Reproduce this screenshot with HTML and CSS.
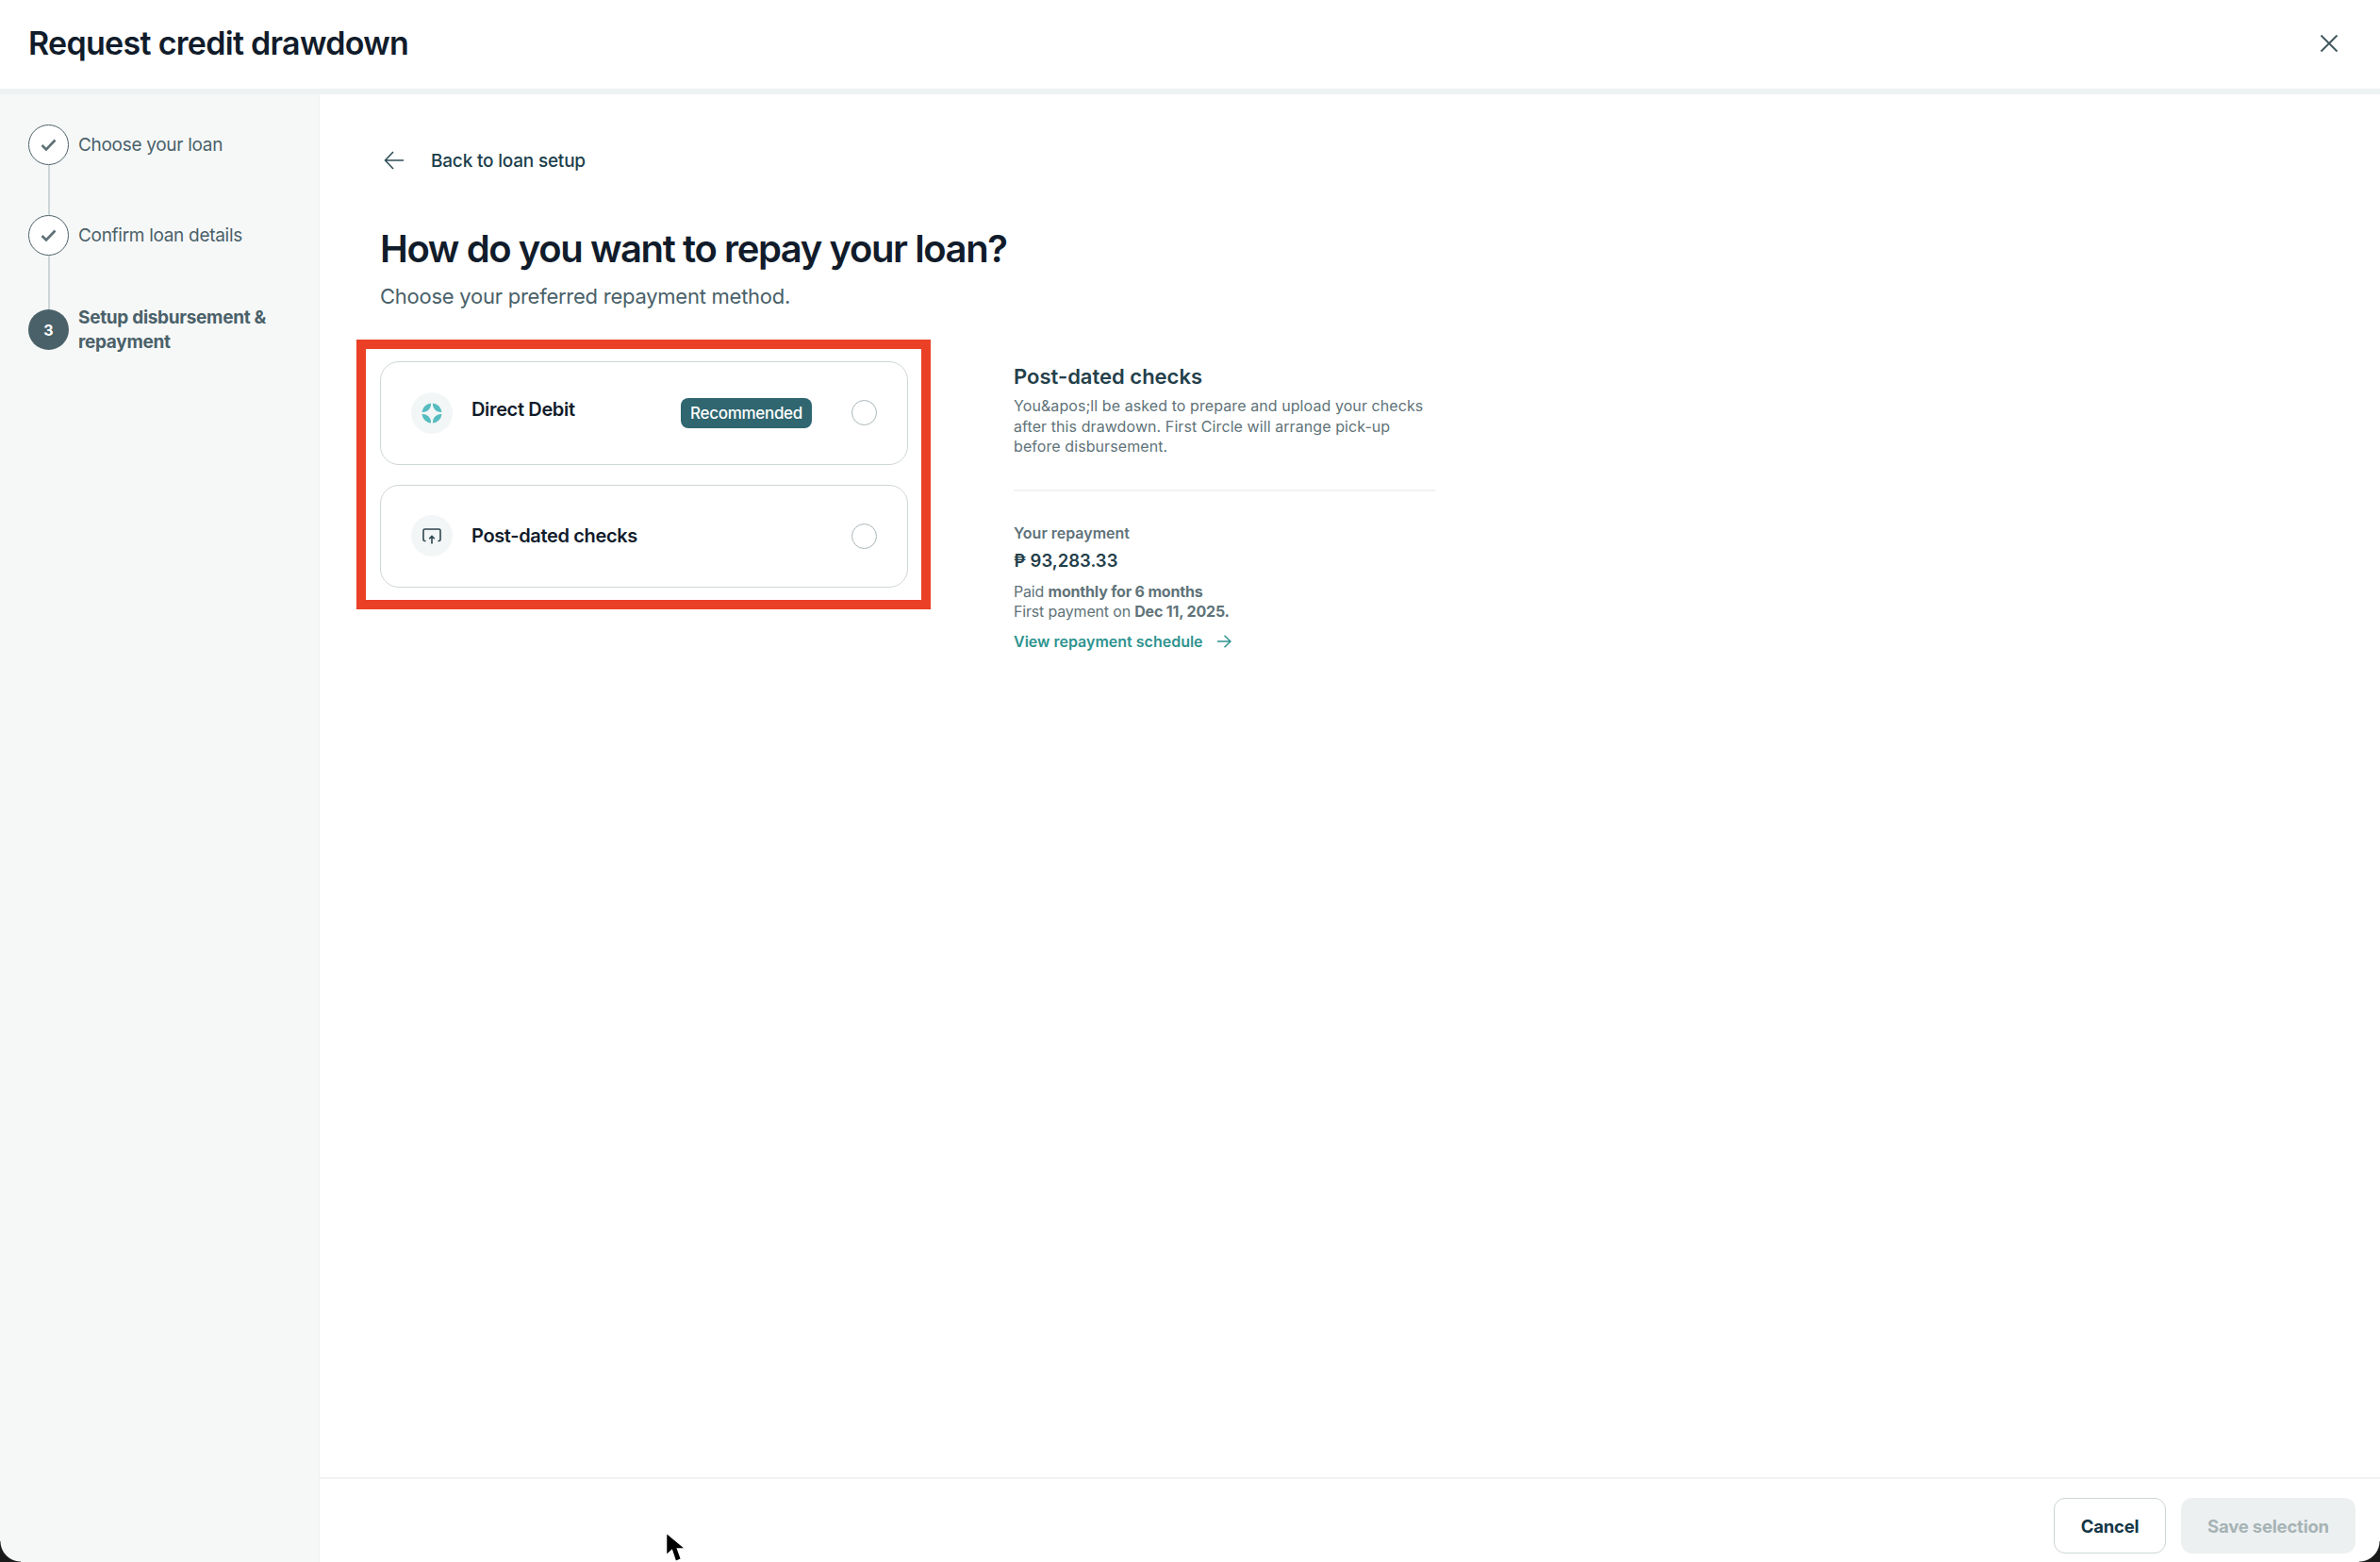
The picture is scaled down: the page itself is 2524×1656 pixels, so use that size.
FILE: index.html
```html
<!DOCTYPE html>
<html lang="en">
<head>
  <meta charset="UTF-8" />
  <title>Request credit drawdown</title>
  <link rel="stylesheet" href="styles.css">
</head>
<body>

<div class="app">
  <header class="topbar">
    <h1>Request credit drawdown</h1>
    <button class="btn-close" aria-label="Close">
      <svg width="20" height="20" viewBox="0 0 20 20" fill="none" stroke="#3d545c" stroke-width="1.8"><path d="M1.5 1.5l17 17M18.500 1.500l-17 17"/></svg>
    </button>
  </header>

  <div class="layout">
    <aside class="sidebar">
      <div class="step step-one">
        <div class="step-marker">
          <span class="step-circle">
            <svg width="17" height="13" viewBox="0 0 17 13" fill="none" stroke="#5f7177" stroke-width="2.6"><path d="M1.500 7l4.500 4.500L15.500 1.500"/></svg>
          </span>
          <span class="step-line"></span>
        </div>
        <span class="step-label">Choose your loan</span>
      </div>
      <div class="step step-two">
        <div class="step-marker">
          <span class="step-circle">
            <svg width="17" height="13" viewBox="0 0 17 13" fill="none" stroke="#5f7177" stroke-width="2.6"><path d="M1.500 7l4.500 4.500L15.500 1.500"/></svg>
          </span>
          <span class="step-line"></span>
        </div>
        <span class="step-label">Confirm loan details</span>
      </div>
      <div class="step">
        <div class="step-marker">
          <span class="step-circle current">3</span>
        </div>
        <span class="step-label current">Setup disbursement &amp; repayment</span>
      </div>
    </aside>

    <main class="main">
      <div class="content">
        <a class="back" href="#">
          <svg width="22" height="20" viewBox="0 0 22 20" fill="none" stroke="#2c4a55" stroke-width="1.5"><path d="M21 10H1.500M10 1L1.500 10l8.500 9"/></svg>
          <span>Back to loan setup</span>
        </a>
        <h2>How do you want to repay your loan?</h2>
        <p class="subtitle">Choose your preferred repayment method.</p>

        <div class="columns">
          <div class="options">
            <label class="option">
              <span class="option-icon">
                <svg width="22" height="22" viewBox="0 0 22 22" fill="#56bcc0">
                  <path d="M10 .5C10.500 6 6 10.500 .5 10A10.500 10.500 0 0 1 10 .5z"/>
                  <path d="M12 .5C11.500 6 16 10.500 21.500 10A10.500 10.500 0 0 0 12 .5z"/>
                  <path d="M10 21.500C10.500 16 6 11.500 .5 12A10.500 10.500 0 0 0 10 21.500z"/>
                  <path d="M12 21.500C11.500 16 16 11.500 21.500 12A10.500 10.500 0 0 1 12 21.500z"/>
                </svg>
              </span>
              <span class="option-name raised">Direct Debit</span>
              <span class="badge">Recommended</span>
              <span class="radio"></span>
            </label>
            <label class="option">
              <span class="option-icon">
                <svg width="20" height="17" viewBox="0 0 20 17" fill="none" stroke="#2f4650" stroke-width="1.6">
                  <path d="M3.500 13.500H2.500A1.500 1.500 0 0 1 1 12V2.500A1.500 1.500 0 0 1 2.500 1h15A1.500 1.500 0 0 1 19 2.500V12a1.500 1.500 0 0 1-1.500 1.500h-1"/>
                  <path d="M10 16.500V8.500M7.200 11.300L10 8.500l2.800 2.800"/>
                </svg>
              </span>
              <span class="option-name">Post-dated checks</span>
              <span class="radio"></span>
            </label>
          </div>

          <section class="details">
            <h3>Post-dated checks</h3>
            <p class="details-text">You&amp;apos;ll be asked to prepare and upload your checks after this drawdown. First Circle will arrange pick-up before disbursement.</p>
            <hr>
            <div class="repay-label">Your repayment</div>
            <div class="repay-amount">₱ 93,283.33</div>
            <p class="repay-note">Paid <b>monthly for 6 months</b><br>First payment on <b>Dec 11, 2025.</b></p>
            <a class="schedule" href="#">
              <span>View repayment schedule</span>
              <svg width="15" height="14" viewBox="0 0 15 14" fill="none" stroke="#2f938f" stroke-width="1.500"><path d="M0 7h14M7.500 .8L14 7l-6.500 6.200"/></svg>
            </a>
          </section>
        </div>
      </div>

      <footer class="footer">
        <button class="btn btn-cancel">Cancel</button>
        <button class="btn btn-save" disabled>Save selection</button>
      </footer>
    </main>
  </div>
</div>

<!-- screen capture leftovers: window corners and mouse pointer -->
<span class="corner corner-left"></span>
<span class="corner corner-right"></span>
<svg class="pointer" width="24" height="33" viewBox="0 0 24 33">
  <path d="M1.500 1V25l6-5.500 4 12 6-2.500-4-11h8.500z" fill="#000" stroke="#fff" stroke-width="1.500"/>
</svg>

</body>
</html>
```
FILE: styles.css
```css
html, body {
  margin: 0;
  height: 100%;
  overflow: hidden;
}
body {
  font-family: Inter, "Noto Sans", sans-serif;
  background-color: white;
  color: #111c2b;
  position: relative;
}
.app {
  display: flex;
  flex-direction: column;
  height: 100vh;
}
.topbar {
  display: flex;
  align-items: center;
  justify-content: space-between;
  box-sizing: border-box;
  height: 100px;
  padding: 0 44px 3px 30px;
  border-bottom: 6px solid #eff2f3;
}
.topbar h1 {
  margin: 0;
  font-size: 34px;
  font-weight: 600;
  letter-spacing: -0.7px;
}
.btn-close {
  display: flex;
  padding: 0;
  border: none;
  background: none;
}
.layout {
  display: flex;
  flex: 1;
  min-height: 0;
}

/* steps */
.sidebar {
  box-sizing: border-box;
  width: 339px;
  padding: 32px 20px 0 30px;
  background-color: #f6f8f8;
  border-right: 1px solid #eef0f1;
}
.step {
  display: flex;
  gap: 10px;
}
.step-marker {
  display: flex;
  flex-direction: column;
  align-items: center;
  width: 43px;
  flex-shrink: 0;
}
.step-circle {
  display: flex;
  align-items: center;
  justify-content: center;
  box-sizing: border-box;
  width: 43px;
  height: 43px;
  border: 1.500px solid #4d6168;
  border-radius: 50%;
  background-color: white;
}
.step-circle.current {
  border: none;
  background-color: #4a6169;
  color: white;
  font-size: 16px;
  font-weight: 700;
}
.step-line {
  width: 2px;
  background-color: #ccd5d7;
}
.step-one .step-line {
  height: 53px;
}
.step-two .step-line {
  height: 57px;
}
.step-label {
  display: flex;
  align-items: center;
  height: 43px;
  font-size: 19px;
  line-height: 26px;
  letter-spacing: -0.3px;
  color: #4a6169;
}
.step-label.current {
  font-weight: 700;
}

/* main */
.main {
  display: flex;
  flex-direction: column;
  flex: 1;
  min-width: 0;
}
.content {
  flex: 1;
  padding: 56px 0 0 64px;
}
.back {
  display: flex;
  align-items: center;
  gap: 28px;
  height: 28px;
  margin-left: 4px;
  font-size: 19px;
  font-weight: 500;
  letter-spacing: -0.2px;
  color: #1c3f4c;
  text-decoration: none;
}
h2 {
  margin: 54px 0 0;
  font-size: 40px;
  line-height: 52px;
  font-weight: 600;
  letter-spacing: -1.4px;
}
.subtitle {
  margin: 9px 0 0;
  font-size: 22px;
  line-height: 30px;
  letter-spacing: -0.25px;
  color: #4a6169;
}
.columns {
  display: flex;
  align-items: flex-start;
  margin: 31px 0 0 -25px;
}

/* the red box is an annotation on the screenshot */
.options {
  display: flex;
  flex-direction: column;
  gap: 21px;
  box-sizing: border-box;
  width: 609px;
  height: 286px;
  padding: 13px 14px 12px 15px;
  border: 10px solid #ea4126;
}
.option {
  display: flex;
  align-items: center;
  box-sizing: border-box;
  height: 109.500px;
  padding: 0 32px 0 32px;
  border: 1.500px solid #cfd6d7;
  border-radius: 20px;
}
.option-icon {
  display: flex;
  align-items: center;
  justify-content: center;
  width: 44px;
  height: 44px;
  border-radius: 50%;
  background-color: #f3f6f6;
  flex-shrink: 0;
}
.option-name {
  margin-left: 20px;
  font-size: 20px;
  font-weight: 600;
  letter-spacing: -0.35px;
  flex: 1;
}
.option-name.raised {
  position: relative;
  top: -4px;
}
.badge {
  margin-right: 42px;
  padding: 6px 10px;
  border-radius: 8px;
  background-color: #2f6670;
  color: white;
  font-size: 17px;
  line-height: 20px;
  font-weight: 500;
  letter-spacing: -0.3px;
}
.radio {
  box-sizing: border-box;
  width: 27px;
  height: 27px;
  border: 1.500px solid #a9b5b8;
  border-radius: 50%;
}

/* details column */
.details {
  width: 447px;
  margin: 25px 0 0 88px;
}
.details h3 {
  margin: 0;
  font-size: 22px;
  line-height: 28px;
  font-weight: 600;
  color: #24404a;
}
.details-text {
  margin: 7px 0 0;
  font-size: 16px;
  line-height: 21.500px;
  letter-spacing: 0.08px;
  color: #5f7379;
}
hr {
  height: 2px;
  margin: 34px 0 33px;
  border: none;
  background-color: #f0f2f3;
}
.repay-label {
  font-size: 16px;
  line-height: 22px;
  font-weight: 600;
  color: #5f7379;
}
.repay-amount {
  margin-top: 5px;
  font-size: 18.500px;
  line-height: 26px;
  font-weight: 600;
  color: #24404a;
}
.repay-note {
  margin: 10px 0 0;
  font-size: 16px;
  line-height: 21px;
  letter-spacing: -0.18px;
  color: #5f7379;
}
.schedule {
  display: flex;
  align-items: center;
  gap: 15px;
  margin-top: 10px;
  font-size: 16px;
  line-height: 22px;
  font-weight: 600;
  color: #2f938f;
  text-decoration: none;
}

/* footer */
.footer {
  display: flex;
  justify-content: flex-end;
  align-items: flex-start;
  gap: 16px;
  box-sizing: border-box;
  height: 90px;
  padding: 20px 26px 0 0;
  border-top: 2px solid #f0f2f3;
}
.btn {
  box-sizing: border-box;
  height: 59px;
  border-radius: 12px;
  font-family: inherit;
  font-size: 18.500px;
  font-weight: 700;
  letter-spacing: -0.2px;
}
.btn-cancel {
  width: 119px;
  border: 1.500px solid #ccd5d7;
  background-color: white;
  color: #143646;
}
.btn-save {
  width: 185px;
  border: none;
  background-color: #edf0f1;
  color: #a6b3b5;
}

.corner {
  position: absolute;
  bottom: 0;
  width: 22px;
  height: 22px;
}
.corner-left {
  left: 0;
  background: radial-gradient(circle at 100% 0, transparent 21px, #1a1a1a 22px);
}
.corner-right {
  right: 0;
  background: radial-gradient(circle at 0 0, transparent 21px, #1a1a1a 22px);
}
.pointer {
  position: absolute;
  left: 705px;
  top: 1624px;
}
```
